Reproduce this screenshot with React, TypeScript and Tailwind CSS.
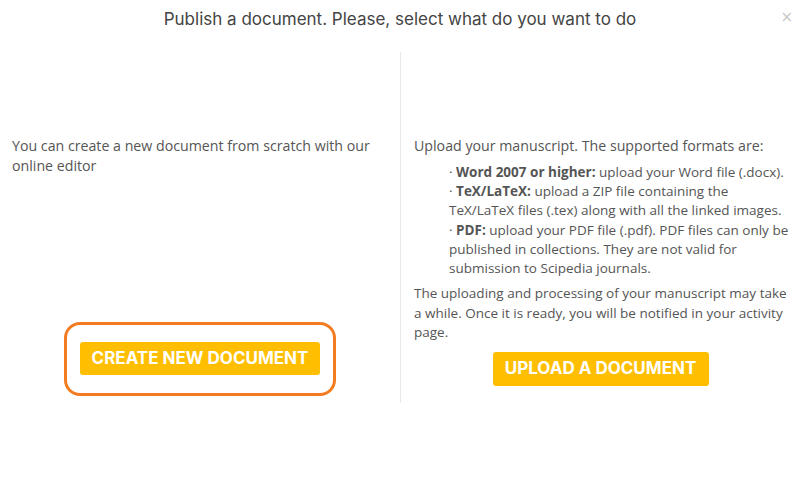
export default function App() {
  return (
    <div className="relative h-[479px] w-[800px] bg-white text-[#555] [font-family:'Open_Sans',sans-serif]">
      <div className="flex h-[52px] items-start justify-center pt-[7px]">
        <h2 className="text-[17px] leading-[24px] text-[#444] [font-family:Inter,sans-serif]">
          Publish a document. Please, select what do you want to do
        </h2>
      </div>
      <button className="absolute right-[7px] top-[10px] text-[15px] leading-none text-[#c8c8c8] [font-family:'DejaVu_Sans',sans-serif]">
        ×
      </button>

      <div className="flex">
        <div className="flex w-[400px] flex-col items-center px-[12px] pt-[84px]">
          <p className="w-full text-[14.2px] leading-[20px]">
            You can create a new document from scratch with our online editor
          </p>
          <div className="mt-[146px] rounded-[16px] border-[3px] border-[#f47b20] px-[13px] pb-[18px] pt-[17px]">
            <button className="flex h-[33px] w-[240px] items-center justify-center rounded-[3px] bg-[#ffbf00] text-[17px] font-bold text-white [font-family:Inter,sans-serif]">
              CREATE NEW DOCUMENT
            </button>
          </div>
        </div>

        <div className="flex h-[351px] w-[400px] flex-col items-center border-l border-[#e8e8e8] px-[13px] pt-[84px]">
          <div className="-mr-[4px] self-stretch">
            <p className="text-[14.2px] leading-[20px]">
              Upload your manuscript. The supported formats are:
            </p>
            <ul className="mt-[7px] pl-[35px] text-[13.5px] leading-[19.2px]">
              <li>
                · <b>Word 2007 or higher:</b> upload your Word file (.docx).
              </li>
              <li>
                · <b>TeX/LaTeX:</b> upload a ZIP file containing the TeX/LaTeX
                files (.tex) along with all the linked images.
              </li>
              <li>
                · <b>PDF:</b> upload your PDF file (.pdf). PDF files can only be
                published in collections. They are not valid for submission to
                Scipedia journals.
              </li>
            </ul>
            <p className="mt-[6px] pr-[1px] text-[13.5px] leading-[19.5px]">
              The uploading and processing of your manuscript may take a while.
              Once it is ready, you will be notified in your activity page.
            </p>
          </div>
          <button className="mt-[9px] flex h-[34px] w-[216px] items-center justify-center rounded-[3px] bg-[#ffbf00] text-[17px] font-bold text-white [font-family:Inter,sans-serif]">
            UPLOAD A DOCUMENT
          </button>
        </div>
      </div>
    </div>
  );
}
